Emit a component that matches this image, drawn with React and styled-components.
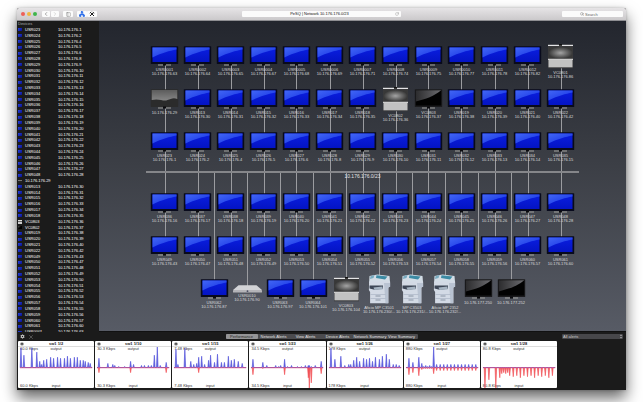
import React, { useState } from 'react';
import styled, { createGlobalStyle } from 'styled-components';
import {
	ChevronLeft,
	ChevronRight,
	Network,
	PanelLeft,
	RotateCw,
	Search,
	X,
} from 'lucide-react';
import { IoMdSettings } from 'react-icons/io';

const range = (from, to) =>
	Array.from({ length: to - from + 1 }, (_, i) => from + i);
const ip = (host) => `10.176.176.${host}`;
const user = (id) => `USR0${id}`;

const sidebarRows = [
	...range(23, 48).map((id, i) => ({
		name: user(id),
		ip: ip([1, 2, 4, 5, 6, 8, 9, ...range(10, 28)][i]),
	})),
	{ name: ip(29), kind: 'unknown' },
	...range(13, 18).map((id) => ({ name: user(id), ip: ip(id + 17) })),
	{ name: 'VC0803', ip: ip(36), kind: 'room' },
	{ name: 'VC0802', ip: ip(37), kind: 'dark' },
	...[19, 20, 21, 22, ...range(49, 61)].map((id, i) => ({
		name: user(id),
		ip: ip(
			[38, 39, 40, 42, 43, 47, 48, 49, 50, 51, 52, 53, 54, 55, 56, 57, 60][i]
		),
	})),
	{ name: 'USR0001', ip: ip(63) },
];

// every row has its top edge and the column (0 - 12) it starts in
const topRow = range(1, 12).map((id, i) => ({
	name: `USR0${String(id).padStart(3, '0')}`,
	ip: ip([63, 64, 65, 67, 68, 69, 71, 74, 75, 77, 78, 82][i]),
}));

const mapRows = [
	{
		top: 25,
		start: 0,
		nodes: [...topRow, { name: 'VC0801', ip: ip(86), kind: 'room' }],
	},
	{
		top: 68,
		start: 0,
		nodes: [
			{ ip: ip(29), kind: 'unknown' },
			...range(13, 18).map((id) => ({ name: user(id), ip: ip(id + 17) })),
			{ name: 'VC0802', ip: ip(36), kind: 'room' },
			{ name: 'VC0803', ip: ip(37), kind: 'dark' },
			...range(19, 22).map((id, i) => ({
				name: user(id),
				ip: ip([38, 39, 40, 42][i]),
			})),
		],
	},
	{
		top: 111,
		start: 0,
		nodes: range(23, 35).map((id, i) => ({
			name: user(id),
			ip: ip([1, 2, 4, 5, 6, 8, 9, 10, 11, 12, 13, 14, 15][i]),
		})),
	},
	{
		top: 172,
		start: 0,
		nodes: range(36, 48).map((id) => ({ name: user(id), ip: ip(id - 20) })),
	},
	{
		top: 215,
		start: 0,
		nodes: range(49, 61).map((id, i) => ({
			name: user(id),
			ip: ip([43, 47, 48, 49, 50, 51, 52, 53, 54, 55, 56, 57, 60][i]),
		})),
	},
	{
		top: 258,
		start: 1.5,
		nodes: [
			{ name: 'USR062', ip: ip(87) },
			{ name: 'USR0010', ip: ip(90), kind: 'switch' },
			{ name: 'USR063', ip: ip(97) },
			{ name: 'USR064', ip: ip(101) },
			{ name: 'VC0803', ip: ip(104), kind: 'room' },
			{ name: 'Aficio MP C3501', ip: '10.176.176.230/...', kind: 'printer' },
			{ name: 'MP C3503', ip: '10.176.176.231/...', kind: 'printer' },
			{ name: 'Aficio MP 2352', ip: '10.176.176.232/...', kind: 'printer' },
			{ ip: '10.176.177.250', kind: 'dark' },
			{ ip: '10.176.177.252', kind: 'dark' },
		],
	},
];

// spikes are [x, output, input]
const charts = [
	{
		title: 'sw1 1/2',
		rate: '60.0 Kbps',
		spikes: [
			[3, 19], [6, 12], [14, 19], [19, 15], [22, 6], [24, 3], [26, 7], [29, 8],
			[33, 10], [36, 9], [40, 10], [43, 9], [47, 9], [50, 11], [53, 9],
			[57, 10], [60, 10], [63, 7], [66, 7], [68, 6], [71, 5], [73, 4],
		],
	},
	{
		title: 'sw1 1/10',
		rate: '30.3 Kbps',
		spikes: [
			[4, 9, 5], [13, 4], [18, 3], [20, 2], [24, 1], [30, 1], [36, 6, 5],
			[39, 3], [47, 2], [50, 2], [54, 2], [57, 2], [60, 12], [63, 20], [66, 2],
			[72, 5, 5],
		],
	},
	{
		title: 'sw1 1/15',
		rate: '7.48 Kbps',
		spikes: [
			[4, 18], [6, 3], [13, 19], [19, 6], [22, 3], [25, 4], [27, 10, 5],
			[30, 11], [33, 3], [37, 7], [39, 12], [43, 5], [46, 13], [50, 5],
			[53, 5], [57, 11], [60, 7], [63, 8], [67, 6], [71, 4],
		],
	},
	{
		title: 'sw1 1/23',
		rate: '34.5 Kbps',
		spikes: [
			[4, 8, 7], [14, 5, 1], [18, 2], [27, 2], [30, 1], [32, 2], [36, 8, 7],
			[39, 1], [43, 2], [49, 1], [53, 1], [57, 2], [60, 2, 10], [61, 2, 20],
			[63, 1, 15], [67, 2], [73, 6, 6],
		],
	},
	{
		title: 'sw1 1/26',
		rate: '178 Kbps',
		spikes: [
			[4, 19], [8, 8], [14, 11], [18, 2], [22, 3], [24, 3], [27, 7], [30, 10],
			[33, 6], [37, 9], [40, 8], [43, 9], [46, 6], [49, 10], [53, 8],
			[56, 11], [60, 13], [63, 8], [67, 3], [70, 3], [73, 2],
		],
	},
	{
		title: 'sw1 1/27',
		rate: '880 Kbps',
		spikes: [
			[5, 9, 7], [9, 5, 5], [15, 10, 8], [18, 4, 2], [20, 1, 1], [22, 2, 1],
			[24, 1, 1], [26, 2, 1], [28, 1, 1], [30, 20, 6],
			...range(0, 11).map((i) => [33 + i * 3.6, 3, 3]),
		],
	},
	{
		title: 'sw1 1/28',
		rate: '80.8 Kbps',
		spikes: [
			[4, 0, 20], [8, 0, 12], [15, 0, 20], [19, 0, 10], [21, 0, 6],
			[23, 0, 5], [25, 0, 6], [27, 0, 5],
			...range(0, 12).map((i) => [29 + i * 3.6, 0, [8, 9, 8, 10][i % 4]]),
		],
	},
];

const tabs = [
	'Performance',
	'Network Alerts',
	'View Alerts',
	'Device Alerts',
	'Network Summary',
	'View Summary',
];

const Gradients = () => (
	<StyledDefs aria-hidden="true">
		<defs>
			<linearGradient id="blue" x1="0" y1="0" x2="0" y2="1">
				<stop offset="0" stopColor="#0a1ee0" />
				<stop offset="1" stopColor="#0414c4" />
			</linearGradient>
			<linearGradient id="gloss" x1="0" y1="0" x2="1" y2="1">
				<stop offset="0" stopColor="#4166f5" />
				<stop offset="1" stopColor="#1430e4" />
			</linearGradient>
			<linearGradient id="grey" x1="0" y1="0" x2="0" y2="1">
				<stop offset="0" stopColor="#5c5c5c" />
				<stop offset="1" stopColor="#868686" />
			</linearGradient>
			<linearGradient id="shine" x1="0" y1="0" x2="1" y2="0">
				<stop offset="0" stopColor="#2c2c2e" />
				<stop offset="1" stopColor="#6c6c70" />
			</linearGradient>
			<radialGradient id="lens">
				<stop offset="0" stopColor="#a4a4a4" />
				<stop offset="1" stopColor="#383838" />
			</radialGradient>
		</defs>
	</StyledDefs>
);

const Stand = () => (
	<>
		<rect x="12.5" y="17.5" width="3" height="2" fill="#0b0b0e" />
		<rect x="7.5" y="18.5" width="5" height="1" fill="#a3a3a0" />
		<rect x="15.5" y="18.5" width="5" height="1" fill="#a3a3a0" />
	</>
);

const art = {
	screen: {
		height: 22,
		draw: (
			<>
				<rect x="0.3" y="0.2" width="27.4" height="17.8" rx="0.6" fill="#080a1c" />
				<rect x="2" y="1.5" width="24" height="14.5" fill="url(#blue)" />
				<path d="M2 1.5H26V3.5C19 5 12 6.5 2 11.5Z" fill="url(#gloss)" />
				<Stand />
			</>
		),
	},
	dark: {
		height: 22,
		draw: (
			<>
				<rect x="0.3" y="0.2" width="27.4" height="17.8" rx="0.6" fill="#1b1b1d" />
				<rect x="1.3" y="1.2" width="25.4" height="15.3" fill="#020202" />
				<path d="M1.3 1.2H26.7C20 7 11 10 1.3 12.5Z" fill="url(#shine)" />
				<Stand />
			</>
		),
	},
	unknown: {
		height: 22,
		draw: (
			<>
				<rect x="0.3" y="0.2" width="27.4" height="17.8" rx="0.6" fill="#2b2b2b" />
				<path
					d="M1.2 1H26.8V10C23 8 20 10 17 11C13 13 9 9 1.2 11Z"
					fill="url(#grey)"
				/>
				<Stand />
			</>
		),
	},
	room: {
		height: 27,
		shift: -2,
		draw: (
			<>
				<rect x="1.5" y="0.8" width="25" height="23.5" fill="#3a3a3c" />
				<rect x="1.5" y="0.8" width="25" height="1.2" fill="#e4e4e6" />
				<rect x="12.5" y="0" width="3" height="1.8" fill="#111" />
				<rect x="2" y="3" width="24" height="11.8" fill="url(#lens)" />
				<rect x="1.5" y="14.8" width="25" height="1" fill="#f4f4f4" />
				<rect x="2" y="15.8" width="24" height="7.5" fill="#c2c2c2" />
			</>
		),
	},
	switch: {
		height: 9,
		shift: 6,
		draw: (
			<>
				<path d="M5 0.3H23L28.5 5H-0.5Z" fill="#d2d3d6" />
				<rect x="-0.5" y="5" width="29" height="2.6" rx="0.6" fill="#b4b4b8" />
				<circle cx="14" cy="6.2" r="0.9" fill="#4c5064" />
			</>
		),
	},
	printer: {
		height: 32,
		shift: -5,
		draw: (
			<>
				<path d="M4 2L12 0.6L24 2L24.6 9H3.6Z" fill="#d3dde6" />
				<path d="M11 1.2L22 2.6L19.5 5.6L10.5 4Z" fill="#3c8ba4" />
				<path d="M5 2.2L9 1L8 4L4.5 5Z" fill="#79abc0" />
				<path d="M3.6 7.5H24.6V13H23V29.3H4.6V18L3.4 16Z" fill="#d3dae5" />
				<path d="M4 11.5H17.5V14.5L10 16L4 14.5Z" fill="#3d4656" />
				<path d="M8 13.5L17 12.5V15.5L9 16Z" fill="#a5b3c1" />
				<path d="M18.5 9H24.6V12.5L22.5 14V29.3H20Z" fill="#b9c3d2" />
				<path d="M5 20.5H20M5 24.5H20" stroke="#a5afc0" strokeWidth="0.6" />
				<path d="M10 22H15M10 26H15" stroke="#6b7588" strokeWidth="0.7" />
			</>
		),
	},
};

const MapNode = ({ node, top, column }) => {
	const { height, shift = 0, draw } = art[node.kind || 'screen'];
	return (
		<StyledNode $top={top + shift} $column={column}>
			<StyledArt
				viewBox={`0 0 28 ${height}`}
				$height={height}
				aria-hidden="true"
			>
				{draw}
			</StyledArt>
			{node.name && <span>{node.name}</span>}
			<span>{node.ip}</span>
		</StyledNode>
	);
};

const Devices = () => (
	<StyledDevices>
		<caption>Devices</caption>
		<tbody>
			{sidebarRows.map((row) => (
				<tr key={row.name}>
					<td>
						<StyledDot $kind={row.kind} />
					</td>
					<th scope="row">{row.name}</th>
					<td>{row.ip}</td>
				</tr>
			))}
		</tbody>
	</StyledDevices>
);

const Chart = ({ title, rate, spikes }) => {
	const line = (side, sign) =>
		'M2 20' +
		spikes
			.map((s) => {
				const tip = 20 + sign * (s[side] || 0);
				return `L${s[0] - 0.8} 20L${s[0]} ${tip}L${s[0] + 0.8} 20`;
			})
			.join('') +
		'L75 20';

	return (
		<StyledCard>
			<header>
				<button aria-label="Chart settings">
					<IoMdSettings size={4} />
				</button>
				<h2>{title}</h2>
			</header>
			<StyledPlot>
				<svg viewBox="0 0 77 40" preserveAspectRatio="none" aria-hidden="true">
					<path d={line(2, 1)} fill="#f46a6a" stroke="#f04a50" strokeWidth="0.6" />
					<path d={line(1, -1)} fill="#6a6ae0" stroke="#4a4ad8" strokeWidth="0.6" />
					<path d="M2 20.3H75" stroke="#e04070" strokeWidth="0.6" />
				</svg>
				<StyledScale>
					<span>{rate}</span>
					<span>output</span>
				</StyledScale>
				<StyledScale>
					<span>{rate}</span>
					<span>input</span>
				</StyledScale>
			</StyledPlot>
		</StyledCard>
	);
};

const App = () => {
	const [activeTab, setActiveTab] = useState('Performance');

	return (
		<>
			<GlobalStyle />
			<Gradients />
			<StyledWindow>
				<StyledTitleBar>
					<StyledTools>
						<StyledLights>
							<StyledLight $color="#ee5f58" />
							<StyledLight $color="#f0b73f" />
							<StyledLight $color="#3fb54b" />
						</StyledLights>
						<StyledGroup>
							<button aria-label="Back">
								<ChevronLeft size={6} color="#555" />
							</button>
							<button aria-label="Forward">
								<ChevronRight size={6} color="#bbb" />
							</button>
						</StyledGroup>
						<StyledGroup>
							<button aria-label="Toggle sidebar">
								<PanelLeft size={5} color="#777" />
							</button>
						</StyledGroup>
						<StyledGroup>
							<button aria-label="Map">
								<Network size={6} color="#2f6fe8" fill="#2f6fe8" strokeWidth={3} />
							</button>
							<button aria-label="Tools">
								<svg width="6" height="6" viewBox="0 0 12 12" aria-hidden="true">
									<path d="M3 3L10 10" stroke="#222" strokeWidth="2" />
									<path d="M9 3L2 10" stroke="#222" strokeWidth="2" />
									<path
										d="M1.5 4.5L4.5 1.5M7.5 2.5L10.5 4.5"
										stroke="#222"
										strokeWidth="1.6"
									/>
								</svg>
							</button>
						</StyledGroup>
					</StyledTools>
					<StyledAddress>
						<span>PeSQ | Network 10.176.176.0/23</span>
						<button aria-label="Reload">
							<RotateCw size={4} color="#888" />
						</button>
					</StyledAddress>
					<StyledSearch>
						<Search size={4} color="#555" />
						<input type="search" aria-label="Search" placeholder="Search" />
					</StyledSearch>
				</StyledTitleBar>
				<StyledMain>
					<StyledSidebar>
						<Devices />
					</StyledSidebar>
					<StyledMap>
						<StyledDiagram>
							{range(0, 12).map((i) => (
								<StyledLink key={i} $column={i} $top={44} $height={182} />
							))}
							{range(0, 9).map((i) => (
								<StyledLink key={i} $column={i + 1.5} $top={152} $height={116} />
							))}
							<StyledBus />
							<StyledBusLabel>10.176.176.0/23</StyledBusLabel>
							{mapRows.map((row) =>
								row.nodes.map((node, i) => (
									<MapNode
										key={`${row.top}-${i}`}
										node={node}
										top={row.top}
										column={row.start + i}
									/>
								))
							)}
						</StyledDiagram>
					</StyledMap>
				</StyledMain>
				<StyledDock>
					<StyledDockBar>
						<StyledDockTools>
							<button aria-label="Settings">
								<IoMdSettings size={5} color="#ccc" />
							</button>
							<button aria-label="Remove">
								<X size={6} color="#888" />
							</button>
						</StyledDockTools>
						<StyledTabs>
							{tabs.map((tab) => (
								<StyledTab
									key={tab}
									$active={tab === activeTab}
									onClick={() => setActiveTab(tab)}
								>
									{tab}
								</StyledTab>
							))}
						</StyledTabs>
						<StyledSelect>
							<select aria-label="Alert filter">
								<option>All alerts</option>
							</select>
							<svg viewBox="0 0 4 6" aria-hidden="true">
								<path
									d="M1 2.3L2 1L3 2.3M1 3.7L2 5L3 3.7"
									fill="none"
									stroke="#ccc"
									strokeWidth="0.7"
								/>
							</svg>
						</StyledSelect>
					</StyledDockBar>
					<StyledCharts>
						{charts.map((chart) => (
							<Chart key={chart.title} {...chart} />
						))}
					</StyledCharts>
				</StyledDock>
			</StyledWindow>
		</>
	);
};

const GlobalStyle = createGlobalStyle`
	* {
		box-sizing: border-box;
	}
	body {
		margin: 0;
		background: #fff;
		font: 4px/4px 'Liberation Sans', Arial, sans-serif;
		overflow: hidden;
	}
	button, input, select {
		font: inherit;
		color: inherit;
		margin: 0;
		padding: 0;
		border: 0;
		background: none;
	}
	svg {
		display: block;
	}
`;

const StyledDefs = styled.svg`
	position: absolute;
	width: 0;
	height: 0;
`;

const StyledWindow = styled.div`
	margin: 8px 17px 12px;
	border-radius: 2px 2px 0 0;
	background: #1b1b1b;
	box-shadow: 0 8px 15px rgba(0, 0, 0, 0.6), 0 0 3px rgba(0, 0, 0, 0.25);
`;

const StyledTitleBar = styled.header`
	display: grid;
	grid-template-columns: 1fr 159px 1fr;
	align-items: center;
	height: 13px;
	padding: 0 3px;
	border-bottom: 1px solid #8e8e92;
	border-radius: 2px 2px 0 0;
	background: linear-gradient(#e6e4e6, #cbc9cb);
`;

const StyledTools = styled.div`
	display: flex;
	align-items: center;
	gap: 4px;
`;

const StyledLights = styled.div`
	display: flex;
	gap: 2px;
	padding: 0 1px;
`;

const StyledLight = styled.span`
	width: 4px;
	height: 4px;
	border-radius: 50%;
	background: ${({ $color }) => $color};
`;

const StyledGroup = styled.div`
	display: flex;
	gap: 1px;
	button {
		display: grid;
		place-items: center;
		min-width: 8px;
		height: 6px;
		border-radius: 1px;
		background: #fbfbfb;
	}
	button:only-child {
		min-width: 10px;
	}
	&:last-child {
		gap: 0;
	}
	&:last-child button {
		min-width: 10px;
	}
`;

const StyledAddress = styled.div`
	display: flex;
	align-items: center;
	height: 6px;
	padding: 0 2px;
	border-radius: 1px;
	background: #fbfbfb;
	color: #111;
	span {
		flex: 1;
		text-align: center;
	}
`;

const StyledSearch = styled.label`
	display: flex;
	justify-self: end;
	align-items: center;
	gap: 1px;
	width: 61px;
	height: 6px;
	padding-left: 18px;
	border-radius: 1px;
	background: #fbfbfb;
	input {
		width: 30px;
		height: 6px;
		appearance: none;
		outline: none;
	}
	input::placeholder {
		color: #666;
	}
`;

const StyledMain = styled.main`
	display: flex;
	height: 311px;
`;

const StyledSidebar = styled.aside`
	display: flex;
	width: 82px;
	overflow: hidden;
	background: #1b1b1b;
	color: #fff;
`;

// the last row runs under the dock
const StyledDevices = styled.table`
	display: flex;
	flex-direction: column;
	flex: 1;
	margin-bottom: -3px;
	caption {
		display: block;
		height: 6px;
		padding: 1px;
		text-align: left;
		color: #aaa;
	}
	tbody {
		display: flex;
		flex-direction: column;
		flex: 1;
	}
	tr {
		display: grid;
		grid-template-columns: 7px 33px 1fr;
		flex: 1;
		align-items: center;
		padding-left: 1px;
	}
	td,
	th {
		padding: 0;
		text-align: left;
		font-weight: normal;
		white-space: nowrap;
	}
`;

const dotColors = {
	room: 'linear-gradient(#ddd 20%, #666 20%, #666 60%, #ccc 60%)',
	dark: 'linear-gradient(135deg, #555, #000 50%)',
	unknown: 'linear-gradient(#777 50%, #222 50%)',
};

const StyledDot = styled.span`
	display: block;
	width: 4px;
	height: ${({ $kind }) => ($kind === 'room' ? 4 : 3)}px;
	background: ${({ $kind }) =>
		dotColors[$kind] || 'linear-gradient(135deg, #2440e0, #08118c)'};
`;

const StyledMap = styled.section`
	flex: 1;
	border-bottom: 1px solid #111;
	background: linear-gradient(#23262e, #3b3e45 45%, #575b65);
`;

const StyledDiagram = styled.div`
	position: relative;
	height: 100%;
	margin: 0 49px;
`;

const columnLeft = ({ $column }) => `calc(100% / 13 * ${$column + 0.5})`;

const StyledLink = styled.span`
	position: absolute;
	left: ${columnLeft};
	top: ${({ $top }) => $top}px;
	width: 1px;
	height: ${({ $height }) => $height}px;
	background: #9b9ca0;
`;

const StyledBus = styled.span`
	position: absolute;
	left: -2px;
	right: -2px;
	top: 150px;
	height: 2px;
	background: #85868a;
`;

const StyledBusLabel = styled.span`
	position: absolute;
	left: 50%;
	top: 153px;
	transform: translateX(-50%);
	color: #e4e4e6;
	font-size: 5px;
	line-height: 5px;
`;

const StyledNode = styled.div`
	position: absolute;
	left: ${columnLeft};
	top: ${({ $top }) => $top}px;
	display: flex;
	flex-direction: column;
	align-items: center;
	width: 33px;
	transform: translateX(-50%);
	color: #dadadc;
	white-space: nowrap;
`;

const StyledArt = styled.svg`
	width: 28px;
	height: ${({ $height }) => $height}px;
	overflow: visible;
`;

const StyledDock = styled.footer`
	padding: 0 1px 2px;
	background: #1b1b1b;
`;

const StyledDockBar = styled.div`
	display: grid;
	grid-template-columns: 1fr auto 1fr;
	align-items: center;
	height: 9px;
	padding: 0 2px;
`;

const StyledDockTools = styled.div`
	display: flex;
	align-items: center;
	gap: 3px;
`;

const StyledTabs = styled.nav`
	display: grid;
	grid-template-columns: repeat(6, 32px);
	border-radius: 1px;
	background: #4b4b4e;
`;

const StyledTab = styled.button`
	height: 5px;
	border-radius: 1px;
	background: ${({ $active }) => ($active ? '#949496' : 'none')};
	color: ${({ $active }) => ($active ? '#2a2a2a' : '#e4e4e4')};
	line-height: 5px;
	white-space: nowrap;
`;

const StyledSelect = styled.div`
	display: flex;
	justify-self: end;
	align-items: center;
	width: 61px;
	height: 5px;
	border-radius: 1px;
	background: #47474a;
	color: #cdcdcd;
	select {
		flex: 1;
		height: 5px;
		padding-left: 1px;
		appearance: none;
	}
	svg {
		width: 4px;
		height: 5px;
	}
`;

const StyledCharts = styled.div`
	display: grid;
	grid-template-columns: repeat(7, 1fr);
	gap: 1px;
	margin-right: 68px;
`;

const StyledCard = styled.article`
	border-radius: 1px;
	background: #fff;
	color: #333;
	header {
		display: grid;
		grid-template-columns: 5px 1fr 5px;
		align-items: center;
		height: 6px;
		padding: 0 2px;
		border-bottom: 1px solid #ddd;
	}
	h2 {
		margin: 0;
		font-size: 4px;
		font-weight: bold;
		text-align: center;
		color: #222;
	}
`;

const StyledPlot = styled.div`
	position: relative;
	display: flex;
	flex-direction: column;
	justify-content: space-between;
	height: 41px;
	svg {
		position: absolute;
		inset: 0;
		width: 100%;
		height: 100%;
	}
`;

const StyledScale = styled.div`
	display: grid;
	grid-template-columns: 1fr auto 1fr;
	padding: 0 2px;
`;

export default App;
